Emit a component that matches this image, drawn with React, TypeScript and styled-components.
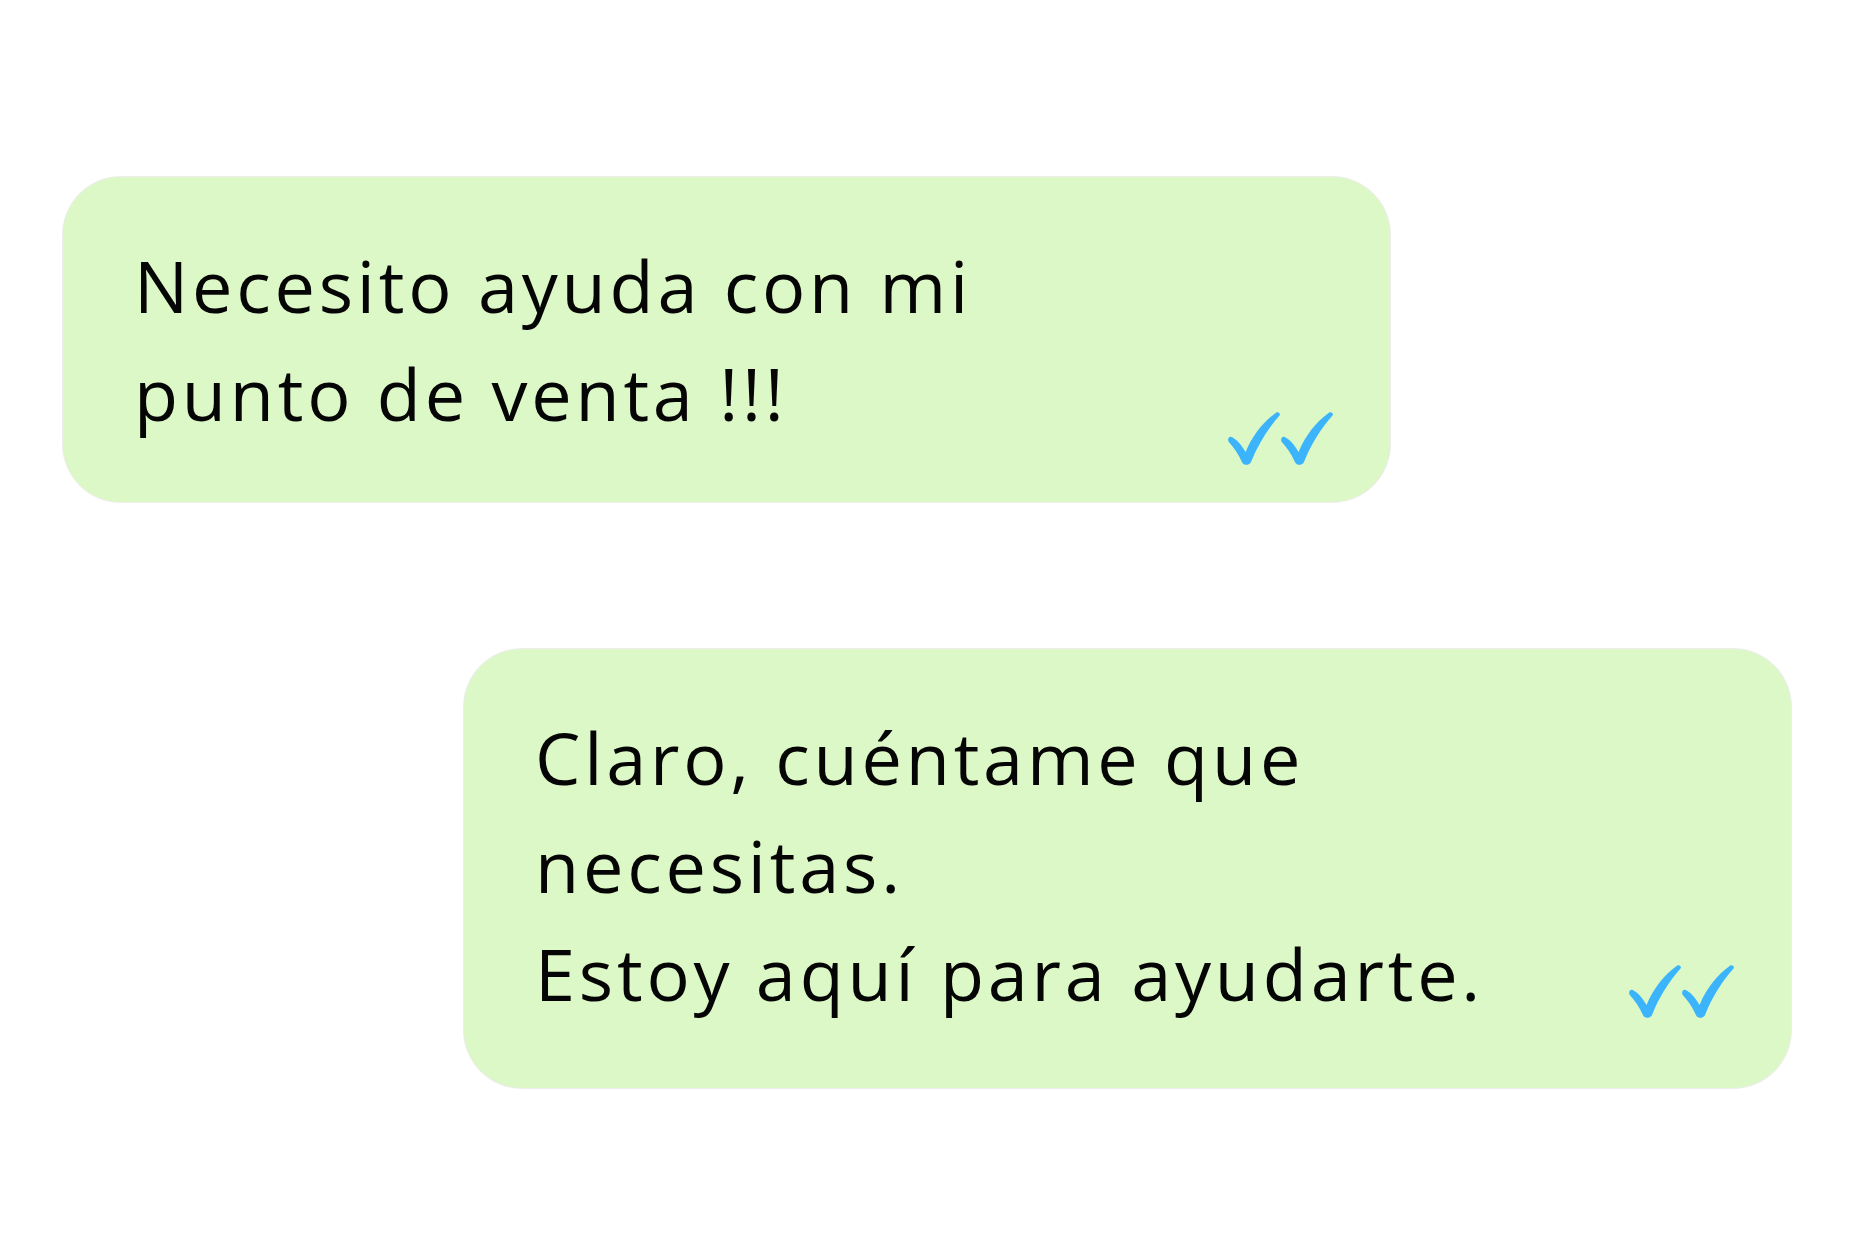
import { createGlobalStyle, styled } from "styled-components";

const GlobalStyle = createGlobalStyle`
  html, body {
    margin: 0;
    padding: 0;
    background: #ffffff;
  }
  body {
    font-family: "Open Sans", "Liberation Sans", sans-serif;
  }
`;

interface Message {
  lines: string[];
  offset: number;
  height: number;
  checksBottom: number;
}

const messages: Message[] = [
  {
    lines: ["Necesito ayuda con mi", "punto de venta !!!"],
    offset: 0,
    height: 325,
    checksBottom: 37,
  },
  {
    lines: ["Claro, cuéntame que", "necesitas.", "Estoy aquí para ayudarte."],
    offset: 401,
    height: 439,
    checksBottom: 70,
  },
];

// hand-drawn tick, thicker at the bottom
const CheckMark = () => (
  <svg width="52" height="53" viewBox="0 0 52 53">
    <path
      d="M3 24.8 C7.5 26.5 12.5 31.5 17.6 40 C24.5 23.5 35 10 48.3 0.6 C50.3 -0.8 53 1.7 51.5 3.6 C40 16.5 30 32.5 23 50 C21.4 53.6 15.8 53.8 14.2 50.4 C10.5 42.5 5.6 35 0.8 30 C-0.9 28 0.8 24 3 24.8 Z"
      fill="#3cb4fb"
    />
  </svg>
);

const App = () => {
  return (
    <>
      <GlobalStyle />
      <Page>
        {messages.map((msg, i) => (
          <Bubble key={i} offset={msg.offset} boxHeight={msg.height}>
            <Text>
              {msg.lines.map((line, j) => (
                <Line key={j}>{line}</Line>
              ))}
            </Text>
            <Checks bottom={msg.checksBottom}>
              <CheckMark />
              <CheckMark />
            </Checks>
          </Bubble>
        ))}
      </Page>
    </>
  );
};

const Page = styled.div`
  width: 1864px;
  height: 1234px;
  box-sizing: border-box;
  padding: 177px 0 0 63px;
  display: flex;
  flex-direction: column;
  gap: 147px;
`;

interface BubbleProps {
  offset: number;
  boxHeight: number;
}

const Bubble = styled.div<BubbleProps>`
  width: 1327px;
  height: ${(props) => props.boxHeight}px;
  margin-left: ${(props) => props.offset}px;
  box-sizing: border-box;
  padding: 54px 57px 0 71px;
  background: #dcf8c6;
  border-radius: 58px;
  box-shadow: 0 0 0 1px rgba(0, 0, 0, 0.07);
  display: flex;
  justify-content: space-between;
  align-items: flex-start;
`;

const Text = styled.div`
  display: flex;
  flex-direction: column;
`;

const Line = styled.span`
  font-size: 72px;
  line-height: 108px;
  font-weight: 400;
  letter-spacing: 3.8px;
  color: #050505;
  white-space: nowrap;
`;

interface ChecksProps {
  bottom: number;
}

const Checks = styled.div<ChecksProps>`
  display: flex;
  gap: 1px;
  align-self: flex-end;
  margin-bottom: ${(props) => props.bottom}px;
`;

export default App;
